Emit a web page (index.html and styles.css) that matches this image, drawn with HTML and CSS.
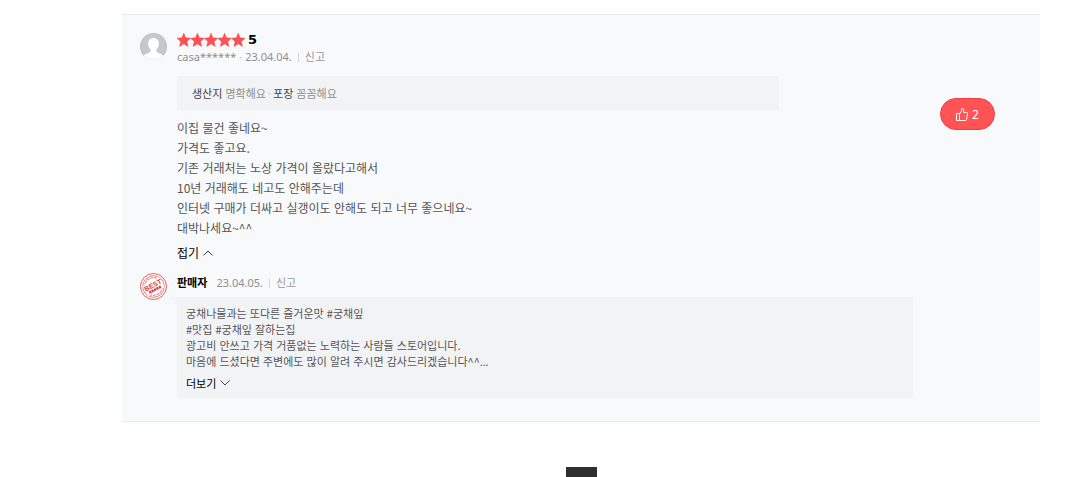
FILE: index.html
```html
<!DOCTYPE html>
<html lang="ko">
<head>
    <meta charset="UTF-8">
    <meta name="viewport" content="width=device-width, initial-scale=1.0">
    <title>리뷰</title>
    <link rel="stylesheet" href="styles.css">
</head>
<body>
    <main class="review">
        <article class="row">
            <svg class="avatar" viewBox="0 0 27 27" aria-hidden="true">
                <clipPath id="round"><circle cx="13.5" cy="13.5" r="13.5"/></clipPath>
                <g clip-path="url(#round)">
                    <rect width="27" height="27" fill="#c5c8cd"/>
                    <path fill="#fff" d="M13.5 5c-3.4 0-5.3 2.3-5.3 5.5 0 2.7 1 4.7 2.5 6 .3 1.5-.2 2.5-1.7 3.2-2 .9-4.5 1.6-5.5 3.3V27h20v-4c-1-1.7-3.5-2.4-5.5-3.3-1.5-.7-2-1.7-1.7-3.2 1.5-1.3 2.5-3.3 2.5-6 0-3.2-1.9-5.5-5.3-5.5z"/>
                </g>
                <circle cx="13.5" cy="13.5" r="13" fill="none" stroke="#000" stroke-opacity=".04"/>
            </svg>
            <div class="content">
                <div class="rating">
                    <svg class="stars" viewBox="0 0 68 14" aria-hidden="true">
                        <path id="star" d="M6.8.3l1.9 4.5 4.8.5-3.6 3.2 1.1 4.9-4.2-2.6-4.2 2.6 1.1-4.9L.1 5.3l4.8-.5z"/>
                        <use href="#star" x="13.6"/>
                        <use href="#star" x="27.2"/>
                        <use href="#star" x="40.8"/>
                        <use href="#star" x="54.4"/>
                    </svg>
                    <strong>5</strong>
                </div>
                <div class="meta">
                    <span class="user">casa******</span>
                    <span class="dot">·</span>
                    <span class="date">23.04.04.</span>
                    <a class="report" href="#">신고</a>
                </div>
                <div class="survey">
                    <b>생산지</b> 명확해요<i>·</i><b>포장</b> 꼼꼼해요
                </div>
                <p class="text">
                    이집 물건 좋네요~<br>
                    가격도 좋고요.<br>
                    기존 거래처는 노상 가격이 올랐다고해서<br>
                    10년 거래해도 네고도 안해주는데<br>
                    인터넷 구매가 더싸고 실갱이도 안해도 되고 너무 좋으네요~<br>
                    대박나세요~^^
                </p>
                <button type="button" class="toggle">접기
                    <svg viewBox="0 0 10 6"><path d="M.5 5.5L5 1l4.5 4.500"/></svg>
                </button>
            </div>
            <button type="button" class="like">
                <svg viewBox="0 0 12 13"><path d="M.5 5.5h3v7h-3zM3.500 6l2-3V1.500c0-.6.4-1 1-1 .8 0 1.300.6 1.300 1.500L7.500 4.500h3c.7 0 1.100.5 1 1.200l-.9 5.700c-.1.700-.5 1.100-1.200 1.100H3.500"/></svg>
                2
            </button>
        </article>
        <article class="row reply">
            <svg class="avatar" viewBox="0 0 27 27" fill="none" stroke="#e25c5f" aria-hidden="true">
                <circle cx="13.5" cy="13.5" r="13.5" fill="#fff" stroke="none"/>
                <circle cx="13.5" cy="13.5" r="13"/>
                <circle cx="13.5" cy="13.5" r="10.8" stroke-width=".8"/>
                <circle cx="13.5" cy="13.5" r="8.8" stroke-width="1.2" stroke-dasharray="3 .8" stroke-opacity=".7"/>
                <g transform="rotate(-27 13.5 13.5)">
                    <rect x="4" y="8" width="19" height="11" fill="#fff" stroke="none"/>
                    <text x="13.5" y="14.5" class="stamp">BEST</text>
                    <path stroke="#df3a3f" stroke-width="2.5" stroke-dasharray="2.2 .5" d="M7 17h13"/>
                </g>
            </svg>
            <div class="content">
                <div class="meta">
                    <strong>판매자</strong>
                    <span class="date">23.04.05.</span>
                    <a class="report" href="#">신고</a>
                </div>
                <div class="bubble">
                    <p>
                        궁채나물과는 또다른 즐거운맛 #궁채잎<br>
                        #맛집 #궁채잎 잘하는집<br>
                        광고비 안쓰고 가격 거품없는 노력하는 사람들 스토어입니다.<br>
                        마음에 드셨다면 주변에도 많이 알려 주시면 감사드리겠습니다^^<span class="ellipsis">…</span>
                    </p>
                    <button type="button" class="toggle">더보기
                        <svg viewBox="0 0 10 6"><path d="M.5.5L5 5 9.500.5"/></svg>
                    </button>
                </div>
            </div>
        </article>
    </main>
    <div class="page-mark"></div>
</body>
</html>
```
FILE: styles.css
```css
* {
    box-sizing: border-box;
}

body {
    margin: 14px 52px 0 122px;
    background: #fff;
    color: #555;
    font: 12px/20px "Noto Sans CJK KR", sans-serif;
}

p {
    margin: 0;
}

button {
    padding: 0;
    border: 0;
    background: none;
    font: inherit;
    cursor: pointer;
}

.review {
    padding: 18px 45px 23px 18px;
    background: #f8f9fb;
    border-top: 1px solid #e9eaec;
    border-bottom: 1px solid #e9eaec;
}

.row {
    display: flex;
    gap: 10px;
}

.avatar {
    flex: none;
    width: 27px;
    height: 27px;
}

.content {
    flex: 1;
    max-width: 736px;
}

.rating {
    display: flex;
    align-items: center;
    gap: 3px;
    height: 14px;
    color: #000;
    font: bold 13px/14px "DejaVu Sans", sans-serif;
}

.stars {
    width: 68px;
    height: 14px;
    fill: #ff5053;
    stroke: #e8474a;
    stroke-width: .5;
}

.meta {
    display: flex;
    align-items: center;
    height: 20px;
    color: #8f8f8f;
    font-family: "Noto Sans", "Noto Sans CJK KR", sans-serif;
    font-size: 11px;
}

.dot {
    margin: 0 3px;
    color: #bbb;
}

.report {
    display: flex;
    align-items: center;
    color: #999;
    text-decoration: none;
}

.report::before {
    content: "";
    width: 1px;
    height: 9px;
    margin: 0 6px;
    background: #d5d5d5;
}

.survey {
    max-width: 602px;
    height: 34px;
    margin: 9px 0 8px;
    padding: 0 15px;
    background: #f2f3f5;
    color: #8f8f8f;
    font-size: 11px;
    line-height: 34px;
}

.survey b {
    color: #444;
    font-weight: normal;
}

.survey i {
    margin: 0 2px;
    color: #bbb;
    font-style: normal;
}

.toggle {
    display: flex;
    align-items: center;
    gap: 4px;
    height: 20px;
    color: #000;
}

.toggle svg {
    width: 10px;
    height: 6px;
    fill: none;
    stroke: #444;
}

.text + .toggle {
    margin-top: 5px;
}

.like {
    display: flex;
    justify-content: center;
    align-items: center;
    gap: 4px;
    width: 55px;
    height: 32px;
    margin: 65px 0 0 auto;
    border: 1px solid #f63e42;
    border-radius: 16px;
    background: #ff5356;
    color: #fff;
    font: 12px "Noto Sans", sans-serif;
}

.like svg {
    width: 12px;
    height: 13px;
    fill: none;
    stroke: #fff;
}

.reply {
    margin-top: 10px;
}

.reply .meta strong {
    margin-right: 9px;
    color: #000;
}

.stamp {
    fill: #df3a3f;
    stroke: none;
    font: bold 7px "Liberation Sans", sans-serif;
    text-anchor: middle;
}

.bubble {
    position: relative;
    margin-top: 4px;
    padding: 8px 9px 5px;
    border-radius: 0 2px 2px 2px;
    background: #f2f3f5;
    font-size: 11px;
    line-height: 16px;
}

/* speech tail */
.bubble::before {
    content: "";
    position: absolute;
    top: 0;
    left: -8px;
    border-top: 8px solid #f2f3f5;
    border-left: 8px solid transparent;
}

.bubble .toggle {
    margin-top: 4px;
}

.ellipsis {
    font-family: "Noto Sans", sans-serif;
    line-height: 1;
}

.page-mark {
    width: 31px;
    height: 10px;
    margin: 45px auto 0;
    background: #2f2f2f;
}
```
